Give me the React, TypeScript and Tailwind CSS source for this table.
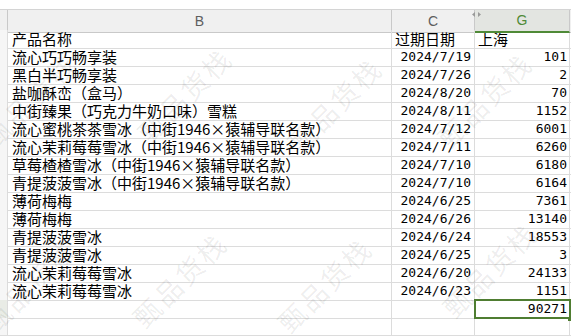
import React from "react";

type Row = { name: string; date: string; qty: string };

const rows: Row[] = [
  { name: "流心巧巧畅享装", date: "2024/7/19", qty: "101" },
  { name: "黑白半巧畅享装", date: "2024/7/26", qty: "2" },
  { name: "盐咖酥峦（盒马）", date: "2024/8/20", qty: "70" },
  { name: "中街臻果（巧克力牛奶口味）雪糕", date: "2024/8/11", qty: "1152" },
  { name: "流心蜜桃茶茶雪冰（中街1946×猿辅导联名款）", date: "2024/7/12", qty: "6001" },
  { name: "流心茉莉莓莓雪冰（中街1946×猿辅导联名款）", date: "2024/7/11", qty: "6260" },
  { name: "草莓楂楂雪冰（中街1946×猿辅导联名款）", date: "2024/7/10", qty: "6180" },
  { name: "青提菠菠雪冰（中街1946×猿辅导联名款）", date: "2024/7/10", qty: "6164" },
  { name: "薄荷梅梅", date: "2024/6/25", qty: "7361" },
  { name: "薄荷梅梅", date: "2024/6/26", qty: "13140" },
  { name: "青提菠菠雪冰", date: "2024/6/24", qty: "18553" },
  { name: "青提菠菠雪冰", date: "2024/6/25", qty: "3" },
  { name: "流心茉莉莓莓雪冰", date: "2024/6/20", qty: "24133" },
  { name: "流心茉莉莓莓雪冰", date: "2024/6/23", qty: "1151" },
];

// watermark tiles
const marks = [
  { x: 30, y: -70 },
  { x: 180, y: -70 },
  { x: 330, y: -70 },
  { x: 480, y: -70 },
  { x: 30, y: 100 },
  { x: 185, y: 95 },
  { x: 335, y: 105 },
  { x: 485, y: 100 },
  { x: 30, y: 285 },
  { x: 180, y: 280 },
  { x: 325, y: 285 },
  { x: 490, y: 270 },
];

const grid = "grid grid-cols-[8px_384px_83px_95px_1fr]";
const line = "border-r border-b border-[#dcdcdc]";
const num = "font-['DejaVu_Sans_Mono',monospace] text-[13px]";

function DataRow({ row }: { row: Row }) {
  return (
    <div className={`${grid} h-[18px]`}>
      <div className={`${line} bg-[#f6f6f6]`} />
      <div className={`${line} whitespace-nowrap pl-[4px] text-[15px] leading-[18px]`}>{row.name}</div>
      <div className={`${line} ${num} pr-[3px] text-right leading-[18px]`}>{row.date}</div>
      <div className={`${line} ${num} pr-[2px] text-right leading-[18px]`}>{row.qty}</div>
      <div className="border-b border-[#dcdcdc]" />
    </div>
  );
}

export default function App() {
  return (
    <div className="relative h-[336px] w-[571px] overflow-hidden bg-white font-['Noto_Sans_CJK_SC',sans-serif] text-black">
      <div className="h-[10px] border-b border-[#d4d4d4] bg-white" />

      <div className={`${grid} h-[20px] text-[14px] font-['Liberation_Sans',sans-serif]`}>
        <div className="border-r border-b border-[#c9c9c9] bg-[#f0f0f0]" />
        <div className="flex items-center justify-center border-r border-b border-[#c9c9c9] bg-[#f0f0f0] text-[#5e5e5e]">B</div>
        <div className="flex items-center justify-center border-r border-b border-[#c9c9c9] bg-[#f0f0f0] text-[#5e5e5e]">C</div>
        <div className="relative flex items-center justify-center border-r border-b-2 border-r-[#c9c9c9] border-b-[#4f8a37] bg-[#e3e5e1] text-[#4f8a37]">
          G
          <svg className="absolute -left-[3px] top-[2px]" width="9" height="5" viewBox="0 0 9 5">
            <path d="M3 0 L0 2.5 L3 5 Z" fill="#9a9a9a" />
            <path d="M6 0 L9 2.5 L6 5 Z" fill="#9a9a9a" />
          </svg>
        </div>
        <div className="border-b border-[#c9c9c9] bg-[#f0f0f0]" />
      </div>

      <div className={`${grid} h-[18px]`}>
        <div className={`${line} bg-[#f6f6f6]`} />
        <div className={`${line} pl-[4px] text-[15px] leading-[18px]`}>产品名称</div>
        <div className={`${line} pl-[3px] text-[15px] leading-[18px]`}>过期日期</div>
        <div className={`${line} pl-[3px] text-[15px] leading-[18px]`}>上海</div>
        <div className="border-b border-[#dcdcdc]" />
      </div>

      {rows.map((row, i) => (
        <DataRow key={i} row={row} />
      ))}

      <div className={`${grid} h-[18px]`}>
        <div className={`${line} bg-[#e9ece6]`} />
        <div className={line} />
        <div className={line} />
        <div className={`${line} ${num} relative pr-[2px] text-right leading-[18px]`}>
          90271
          <span className="absolute -left-[1px] -top-[1px] h-[20px] w-[97px] border-2 border-[#4f7d31]" />
          <span className="absolute -right-[3px] -bottom-[3px] h-[4px] w-[4px] bg-[#4f7d31]" />
        </div>
        <div className="border-b border-[#dcdcdc]" />
      </div>

      <div className={`${grid} h-[18px]`}>
        <div className={`${line} bg-[#f6f6f6]`} />
        <div className={line} />
        <div className={line} />
        <div className={line} />
        <div className="border-b border-[#dcdcdc]" />
      </div>

      {marks.map((m, i) => (
        <span
          key={i}
          className="pointer-events-none absolute -translate-x-1/2 -translate-y-1/2 -rotate-45 whitespace-nowrap text-[27px] tracking-[3px] text-black/[0.08]"
          style={{ left: m.x, top: m.y }}
        >
          甄品货栈
        </span>
      ))}
    </div>
  );
}
